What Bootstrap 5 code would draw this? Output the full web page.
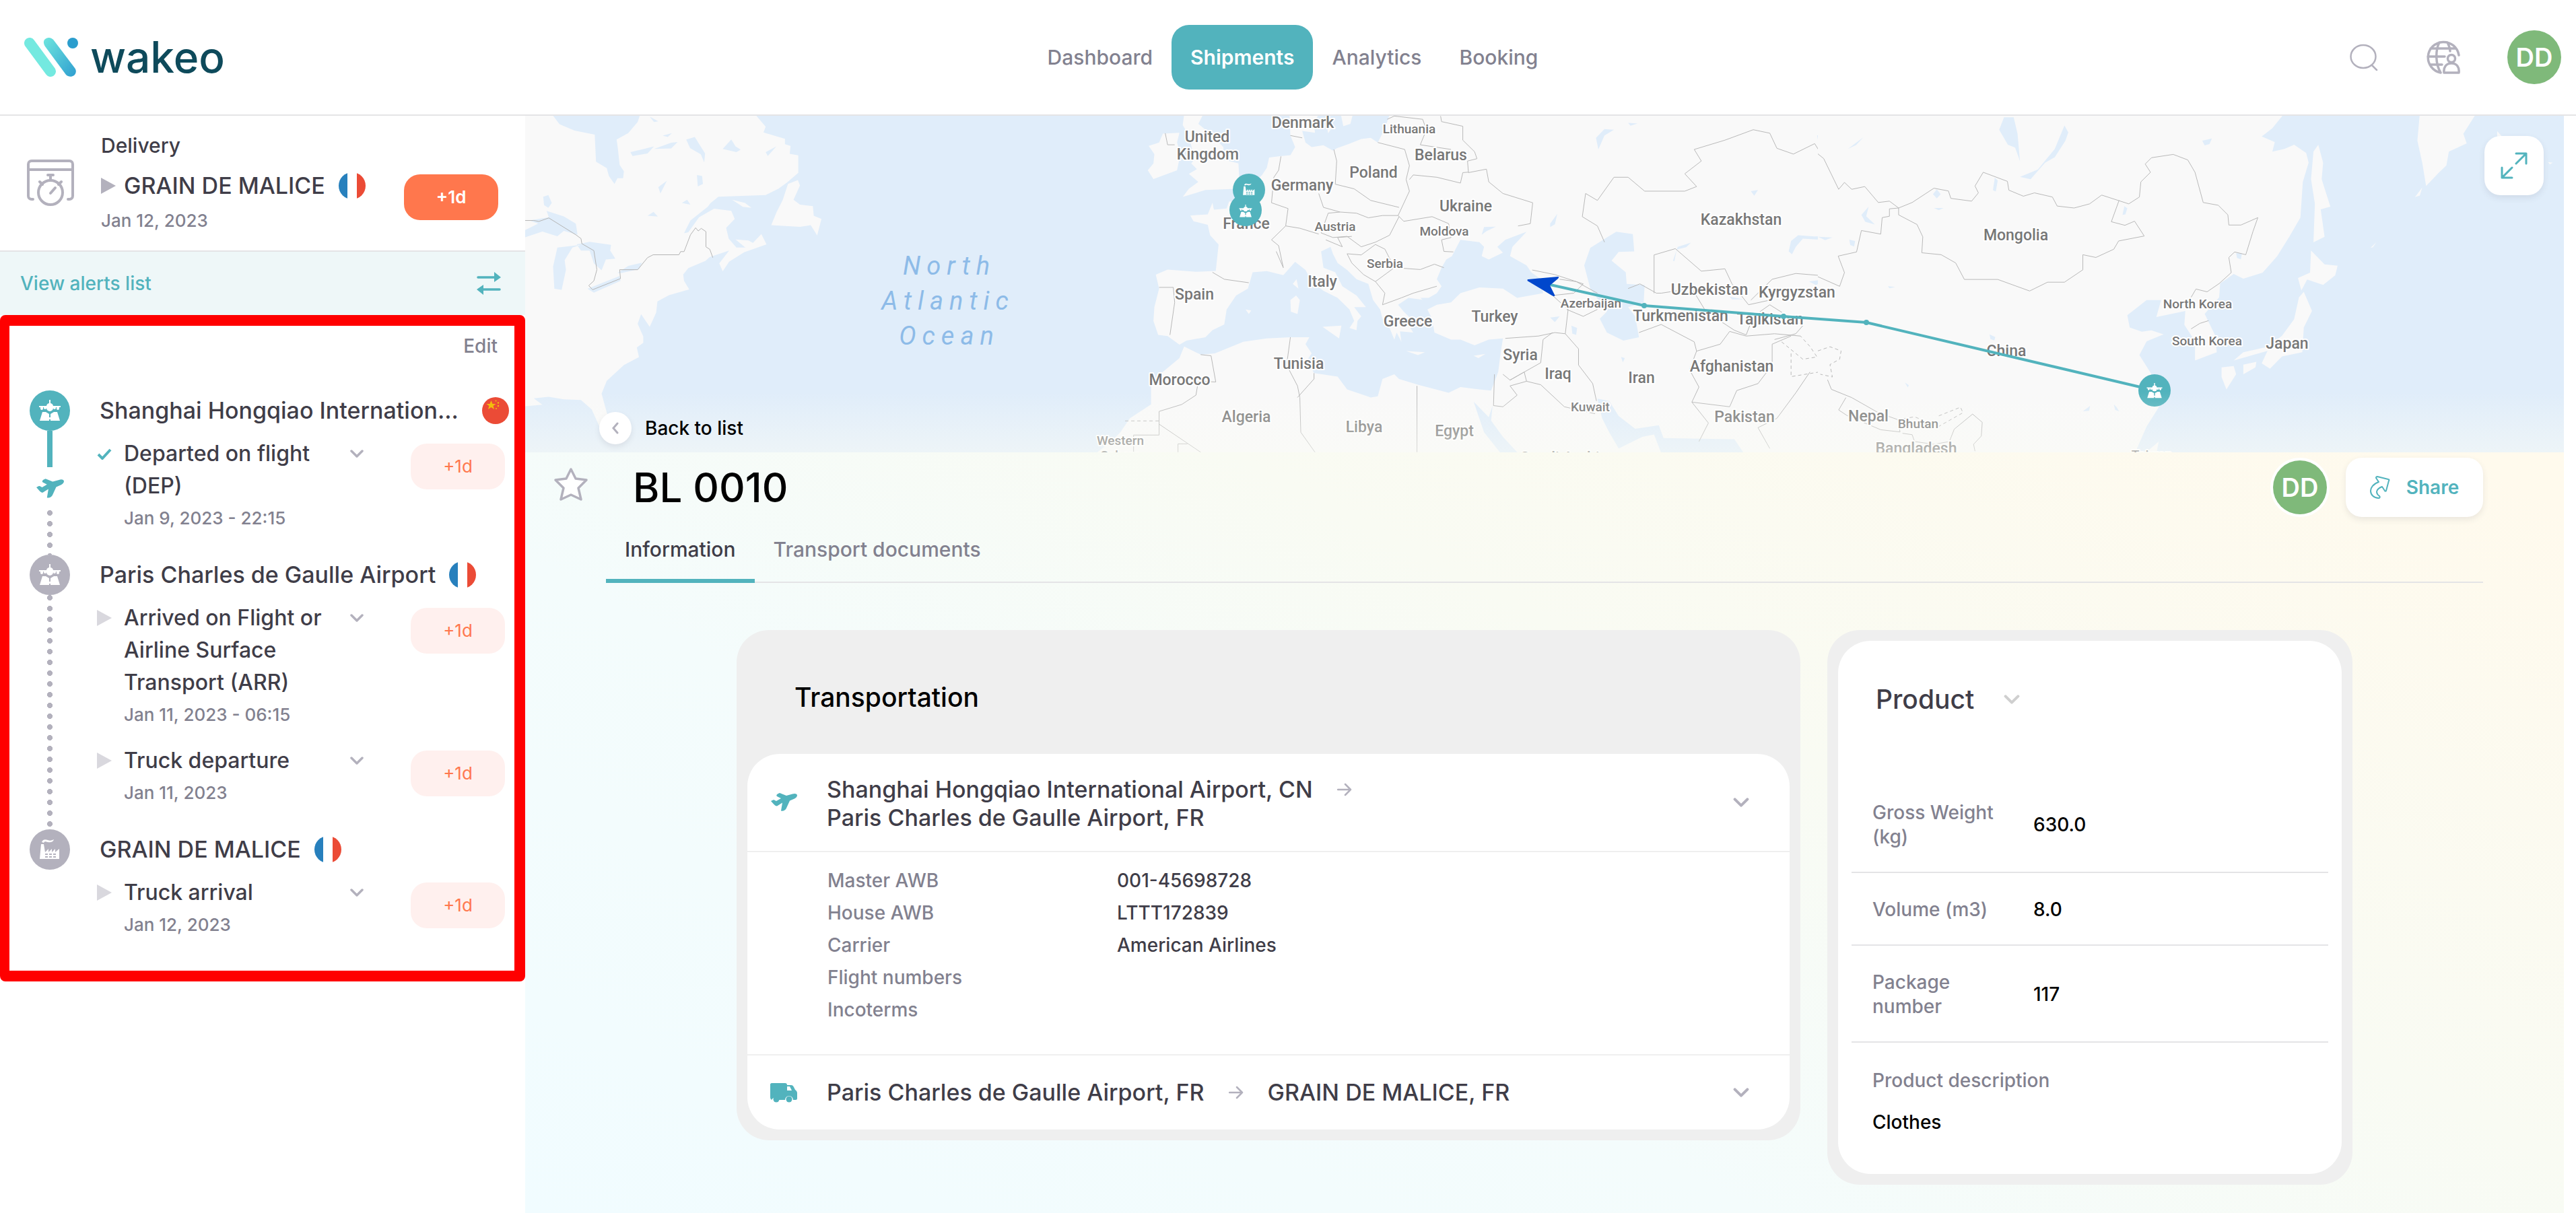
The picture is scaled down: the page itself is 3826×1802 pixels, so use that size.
<!DOCTYPE html>
<html lang="en">
<head>
<meta charset="utf-8">
<meta name="viewport" content="width=device-width, initial-scale=1">
<title>BL 0010 - Wakeo</title>
<link href="https://cdn.jsdelivr.net/npm/bootstrap@5.3.0/dist/css/bootstrap.min.css" rel="stylesheet">
<style>
:root{--teal:#52b3bd;--ink:#3f3d48;--slate:#82818f;--mist:#b3b1bd;--line:#e4e4e6;--orange:#ff774d}
body{font-family:Inter,"Liberation Sans",sans-serif;font-size:28px;line-height:36px;font-weight:500;color:var(--ink);background:#fff}
svg{display:block;flex:none}
a{text-decoration:none;color:inherit}
.topbar{height:172px;border-bottom:2px solid var(--line);padding:0 22px 0 36px}
.side-slot{flex:1 1 0}
.brand-name{font-size:64px;line-height:72px;color:#0e4a5b}
.topbar .nav-link{height:96px;padding:0 28px;border-radius:26px;color:var(--slate);font-size:30px}
.topbar .nav-link.active{background:var(--teal);color:#fff;font-weight:600}
.icon-btn{background:none;border:0;padding:0;color:var(--mist)}
.globe-btn{margin:0 70px 0 72px}
.avatar{width:80px;height:80px;border-radius:50%;background:#7fb97a;color:#fff;font-size:38px;font-weight:600}
.avatar-ring{box-shadow:0 0 0 4px #fff;margin-right:28px}
.sidebar{width:780px;flex:none;background:#fff}
.delivery{height:202px;border-bottom:2px solid var(--line);padding:0 40px}
.delivery-info{margin-left:40px}
.delivery-label{font-size:30px}
.delivery-place{margin:20px 0 12px}
.flag-gap{margin-left:20px}
.place{font-size:34px;line-height:44px}
.delay{width:140px;height:68px;border-radius:24px;border:0;font-size:26px;background:#fff0ee;color:var(--orange);flex:none}
.delay-strong{background:var(--orange);color:#fff;font-weight:600;margin-top:42px}
.alerts{height:94px;background:#eef7f8;color:var(--teal);padding:0 36px 0 30px}
.timeline{border:16px solid #f00;border-left-width:14px;border-radius:8px;height:990px;background:#fff}
.edit-row{height:96px;padding:12px 25px 0 0;color:var(--slate)}
.station{padding-left:30px}
.rail{width:60px;flex:none}
.stop{width:60px;height:60px;border-radius:50%;background:var(--mist);color:#fff;flex:none}
.stop-done{background:var(--teal)}
.solid{width:8px;height:54px;background:var(--teal)}
.leg{height:64px;color:var(--teal)}
.dots{width:8px;background:radial-gradient(circle at 4px 4px,var(--mist) 4px,transparent 4px) 0 0/8px 16px repeat-y}
.stop-body{margin-left:44px}
.stop-head{height:60px;gap:20px}
.events{gap:20px;padding:10px 14px 30px 0;margin-left:-4px}
.events .delay{margin-top:9px}
.event-text{width:302px;font-size:32px;line-height:48px;margin-left:18px}
.mark-box{width:22px;height:48px}
.event-date{color:var(--slate);white-space:nowrap;font-size:26px}
.chev{height:48px;margin-left:34px;background:none;border:0;padding:0;color:var(--mist)}
.main{background:linear-gradient(28deg,#f1fcff 0%,#f4fcfc 30%,#f9fbf3 52%,#fffaed 82%,#fffaed 100%);margin-right:18px;min-height:1630px}
.map-wrap{height:500px;background:#e0edfa;overflow:hidden}
.map-wrap>svg{width:100%;height:500px}
.ocean{letter-spacing:9px;font-weight:400}
.map-fade{left:0;right:0;bottom:0;height:90px;background:linear-gradient(rgba(250,251,245,0),rgba(250,251,245,.5))}
.expand{right:30px;top:30px;width:88px;height:88px}
.tile-btn{background:#fff;border:0;border-radius:24px;box-shadow:0 4px 10px rgba(60,60,80,.1);color:var(--teal)}
.back{left:110px;bottom:12px;gap:20px;color:#000}
.back-dot{width:48px;height:48px;border-radius:50%;background:#fff;box-shadow:0 4px 8px rgba(60,60,80,.1);color:var(--mist)}
.title-row{padding:8px 120px 0 42px}
.shipment{font-size:60px;line-height:88px;font-weight:500;color:#000;margin:0 0 0 66px}
.share{width:204px;height:88px;font-weight:600;gap:24px}
.tab-row{margin:0 120px;border-bottom:2px solid var(--line)}
.tab-row .nav-link{padding:28px 28px 24px;font-size:30px;line-height:40px;border-bottom:6px solid transparent;margin-bottom:-2px;color:var(--slate)}
.tab-row .nav-link.active{border-color:var(--teal);color:var(--ink)}
.panels{max-width:2400px;margin:70px auto 42px;gap:40px}
.panel-grey{background:#efefef;border-radius:48px;padding:16px}
.panel-white{background:#fff;border-radius:48px}
.transport{flex:1 1 1580px}
.product{flex:1 1 780px}
.panel-title{font-size:39px;line-height:40px;font-weight:500;margin:0}
.transport .panel-title{color:#000;padding:64px 70px}
.leg-row{padding:0 60px 0 34px;font-size:34px;line-height:42px}
.leg-names{margin-left:44px}
.leg-pair{gap:0 36px}
.first-leg{height:144px}
.first-leg .leg-names{padding-top:4px}
.second-leg{height:112px;border-top:2px solid #efefef}
.facts{border-top:2px solid #efefef;padding:18px 0 0 119px;line-height:48px;height:302px}
.facts dt{width:430px;font-weight:500;color:var(--slate)}
.facts dd{margin:0}
.product .panel-white{padding:67px 20px 0;height:792px}
.product .panel-title{padding-left:36px;gap:44px}
.product table{margin-top:94px;width:100%}
.product td,.product th{padding:36px 0 34px;font-weight:500;vertical-align:middle}
.product th{width:270px;padding-left:31px;padding-right:50px;color:var(--slate)}
.product td{color:#000}
.product tr{border-bottom:2px solid var(--line)}
.desc{padding:38px 31px;gap:26px}
.desc-label{color:var(--slate)}
</style>
<script src="https://cdn.jsdelivr.net/npm/bootstrap@5.3.0/dist/js/bootstrap.bundle.min.js"></script>
</head>
<body>
<svg width="0" height="0" class="position-absolute" aria-hidden="true">
<defs>
<symbol id="airport" viewBox="0 0 32 32"><path d="M15 0h2v5a5 5 0 0 1 4 4h11v2h-2v2a2 2 0 0 1-4 0v-2h-1v1a2 2 0 0 1-4 0 5 5 0 0 1-10 0 2 2 0 0 1-4 0v-1H6v2a2 2 0 0 1-4 0v-2H0V9h11a5 5 0 0 1 4-4z"/><path d="M5 18h5l5 3v5h2v-5l5-3h5l4 13H17v-2h-2v2H1z"/></symbol>
<symbol id="factory" viewBox="0 0 32 32"><path d="M4 5c2-5 6-4 9-3s5 1 9-1c-1 4-5 5-9 4s-5-1-6 1z"/><path fill-rule="evenodd" d="M3 8h4l2 12 5-5v5l5-5v5l5-5v5l6-5v15H1zM9 22v2h4v-2zm6 0v2h4v-2zm6 0v2h4v-2zM9 26v2h4v-2zm6 0v2h4v-2zm6 0v2h4v-2z"/></symbol>
<symbol id="plane" viewBox="0 0 40 28"><path d="M1 12l3-1.500c2-1 3 .5 5 1.500l7-4-6-3c-2-2 1-4 4-5l10 4 9-2.500c4-1.500 7 0 7 2s-2 4-4 5l-7 3-5 11c-1 3-5 5-8 4l2-12-8 5c-2 0-3-1-5-3z"/></symbol>
<symbol id="truck" viewBox="0 0 40 30"><path d="M2 1h20c2 0 3 1 3 3h6c2 0 3 1 4 3l2 4c2 1 3 3 3 5v8c0 1-1 2-2 2h-4a6 6 0 0 0-12 0h-9a6 6 0 0 0-11 0c-1-1-2-2-2-4V3c0-1 1-2 2-2z"/><path d="M25 6h4l3 6h-7z" fill="#fff"/><circle cx="9" cy="25" r="4.500"/><circle cx="28" cy="25" r="4.500"/></symbol>
<symbol id="down" viewBox="0 0 20 12"><path d="M2 2l8 8 8-8" fill="none" stroke="currentColor" stroke-width="3.500" stroke-linecap="round" stroke-linejoin="round"/></symbol>
<symbol id="right" viewBox="0 0 22 20"><path d="M1 10h19M12 2l8 8-8 8" fill="none" stroke="currentColor" stroke-width="2.500" stroke-linecap="round" stroke-linejoin="round"/></symbol>
<symbol id="play" viewBox="0 0 22 24"><path d="M0 0l22 12L0 24z"/></symbol>
<symbol id="fr" viewBox="0 0 40 40"><clipPath id="rnd"><circle cx="20" cy="20" r="20"/></clipPath><g clip-path="url(#rnd)"><path fill="#2780bd" d="M0 0h13v40H0z"/><path fill="#fff" d="M13 0h14v40H13z"/><path fill="#eb4b36" d="M27 0h13v40H27z"/></g></symbol>
<symbol id="cn" viewBox="0 0 40 40"><circle cx="20" cy="20" r="20" fill="#eb4b36"/><path fill="#f2bd0c" d="M13.500 5l2 5h5l-4 3 1.500 5-4.500-3-4.500 3 1.500-5-4-3h5z"/><g fill="#f2bd0c"><circle cx="20.500" cy="5.500" r="1"/><circle cx="24" cy="8.500" r="1.200"/><circle cx="24" cy="13" r="1.200"/><circle cx="21" cy="17" r="1"/></g></symbol>
</defs>
</svg>

<header class="topbar d-flex align-items-center">
  <div class="side-slot">
    <a href="#" class="d-inline-flex align-items-center gap-3">
      <svg width="82" height="58" viewBox="0 0 82 58"><defs><linearGradient id="lg" x1="0" y1="0" x2="1" y2="1"><stop offset="0" stop-color="#6ee5de"/><stop offset="1" stop-color="#2f9fd0"/></linearGradient></defs><path d="M8 8l31 42" stroke="#74e9e0" stroke-width="16" stroke-linecap="round"/><path d="M30 3c4-4 10-4 14 1l31 41c3 4 2 8-1 11-4 3-9 2-12-1L31 13c-2-3-3-7-1-10z" fill="url(#lg)"/><circle cx="72" cy="8" r="8" fill="#2b9dcd"/></svg>
      <span class="brand-name">wakeo</span>
    </a>
  </div>
  <nav class="nav">
    <a class="nav-link d-flex align-items-center" href="#">Dashboard</a>
    <a class="nav-link active d-flex align-items-center" href="#">Shipments</a>
    <a class="nav-link d-flex align-items-center" href="#">Analytics</a>
    <a class="nav-link d-flex align-items-center" href="#">Booking</a>
  </nav>
  <div class="side-slot d-flex justify-content-end align-items-center">
    <button class="icon-btn" aria-label="Search"><svg width="42" height="40" viewBox="0 0 42 40" fill="none" stroke="currentColor" stroke-width="2.500" stroke-linecap="round"><ellipse cx="20" cy="19" rx="18.500" ry="17"/><path d="M33 32l7 7"/></svg></button>
    <button class="icon-btn globe-btn" aria-label="Language"><svg width="50" height="50" viewBox="0 0 50 50" fill="none" stroke="currentColor" stroke-width="3.500" stroke-linecap="round" stroke-linejoin="round"><path d="M48 22A23 23 0 1 0 21 48M19 3c-6 12-6 32 2 45M31 3c2 4 4 8 4 13M6 12h37M2 24h25M5 36h18"/><circle cx="37" cy="27" r="5.500"/><path d="M26 48c-1-8 3-14 11-14s12 6 11 14z"/></svg></button>
    <span class="avatar d-flex align-items-center justify-content-center">DD</span>
  </div>
</header>

<div class="d-flex">
  <aside class="sidebar">
    <section class="delivery d-flex align-items-center">
      <svg width="70" height="70" viewBox="0 0 70 70" fill="none" stroke="#b3b1bd" stroke-width="4" stroke-linecap="round" stroke-linejoin="round"><path d="M9 59H7c-3 0-5-2-5-5V7c0-3 2-5 5-5h56c3 0 5 2 5 5v47c0 3-2 5-5 5h-2M3 15h64M31 23h8M35 24v6M19 33l4 4M51 33l-4 4"/><circle cx="35" cy="49" r="18"/><path d="M35 50l7-8"/></svg>
      <div class="delivery-info">
        <div class="delivery-label">Delivery</div>
        <div class="place delivery-place d-flex align-items-center"><svg width="22" height="24" fill="#b3b1bd" class="me-2"><use href="#play"/></svg><span class="ms-1">GRAIN DE MALICE</span><svg width="40" height="40" class="flag-gap"><use href="#fr"/></svg></div>
        <div class="event-date">Jan 12, 2023</div>
      </div>
      <button class="delay delay-strong ms-auto">+1d</button>
    </section>
    <a href="#" class="alerts d-flex align-items-center justify-content-between">View alerts list
      <svg width="36" height="34" viewBox="0 0 36 34"><path d="M2 8h28M34 26H6" stroke="#52b3bd" stroke-width="3.500" stroke-linecap="round"/><path d="M26 0l10 8-10 7zM10 19v15L0 26z" fill="#52b3bd"/></svg>
    </a>

    <section class="timeline">
      <div class="edit-row text-end"><a href="#">Edit</a></div>

      <div class="station d-flex">
        <div class="rail d-flex flex-column align-items-center">
          <span class="stop stop-done d-flex align-items-center justify-content-center"><svg width="32" height="32" fill="currentColor"><use href="#airport"/></svg></span>
          <span class="solid"></span>
          <span class="leg d-flex align-items-center"><svg width="42" height="30" fill="currentColor"><use href="#plane"/></svg></span>
          <span class="dots flex-grow-1"></span>
        </div>
        <div class="stop-body flex-grow-1">
          <div class="stop-head place d-flex align-items-center text-nowrap">Shanghai Hongqiao Internation...<svg width="40" height="40" class="ms-auto me-2"><use href="#cn"/></svg></div>
          <div class="events d-flex flex-column">
            <div class="d-flex">
              <span class="mark-box d-flex align-items-center"><svg width="22" height="17" viewBox="0 0 22 17"><path d="M2 9l6 6L20 2" fill="none" stroke="#52b3bd" stroke-width="4"/></svg></span>
              <div class="event-text">Departed on flight (DEP)<div class="event-date">Jan 9, 2023 - 22:15</div></div>
              <button class="chev d-flex align-items-center" aria-label="Details"><svg width="20" height="12"><use href="#down"/></svg></button>
              <button class="delay ms-auto">+1d</button>
            </div>
          </div>
        </div>
      </div>

      <div class="station d-flex">
        <div class="rail d-flex flex-column align-items-center">
          <span class="stop d-flex align-items-center justify-content-center"><svg width="32" height="32" fill="currentColor"><use href="#airport"/></svg></span>
          <span class="dots flex-grow-1"></span>
        </div>
        <div class="stop-body flex-grow-1">
          <div class="stop-head place d-flex align-items-center text-nowrap">Paris Charles de Gaulle Airport<svg width="40" height="40"><use href="#fr"/></svg></div>
          <div class="events d-flex flex-column">
            <div class="d-flex">
              <span class="mark-box d-flex align-items-center"><svg width="22" height="24" fill="#d9d8de"><use href="#play"/></svg></span>
              <div class="event-text">Arrived on Flight or Airline Surface Transport (ARR)<div class="event-date">Jan 11, 2023 - 06:15</div></div>
              <button class="chev d-flex align-items-center" aria-label="Details"><svg width="20" height="12"><use href="#down"/></svg></button>
              <button class="delay ms-auto">+1d</button>
            </div>
            <div class="d-flex">
              <span class="mark-box d-flex align-items-center"><svg width="22" height="24" fill="#d9d8de"><use href="#play"/></svg></span>
              <div class="event-text">Truck departure<div class="event-date">Jan 11, 2023</div></div>
              <button class="chev d-flex align-items-center" aria-label="Details"><svg width="20" height="12"><use href="#down"/></svg></button>
              <button class="delay ms-auto">+1d</button>
            </div>
          </div>
        </div>
      </div>

      <div class="station d-flex">
        <div class="rail d-flex flex-column align-items-center">
          <span class="stop d-flex align-items-center justify-content-center"><svg width="32" height="32" fill="currentColor"><use href="#factory"/></svg></span>
        </div>
        <div class="stop-body flex-grow-1">
          <div class="stop-head place d-flex align-items-center text-nowrap">GRAIN DE MALICE<svg width="40" height="40"><use href="#fr"/></svg></div>
          <div class="events d-flex flex-column">
            <div class="d-flex">
              <span class="mark-box d-flex align-items-center"><svg width="22" height="24" fill="#d9d8de"><use href="#play"/></svg></span>
              <div class="event-text">Truck arrival<div class="event-date">Jan 12, 2023</div></div>
              <button class="chev d-flex align-items-center" aria-label="Details"><svg width="20" height="12"><use href="#down"/></svg></button>
              <button class="delay ms-auto">+1d</button>
            </div>
          </div>
        </div>
      </div>
    </section>
  </aside>

  <main class="main flex-grow-1">
    <div class="map-wrap position-relative">
      <svg viewBox="780 172 3028 500" preserveAspectRatio="xMidYMid slice">
        <!-- North America -->
        <g transform="translate(780 160) scale(.6378 .4719)" fill="#f9f9f9">
          <path d="M0 20H62L80 52 115 72 162 85 165 170 190 190 195 215 208 240 215 222 228 222 230 200 220 180 216 130 213 100 240 80 262 45 268 20H535L560 60 555 78 605 98 605 115 618 120 616 145 636 150 636 205 610 235 590 255 560 275 450 280 432 300 425 312 385 355 370 395 380 392 405 345 440 318 480 325 488 350 468 378 474 412 492 440 520 440 550 398 562 430 510 455 475 485 460 515 452 490 475 450 430 470 420 482 380 505 368 525 370 545 382 572 335 590 308 610 305 645 290 690 270 650 262 680 275 720 275 740 260 755 265 785 230 810 190 860 178 900 190 960 205 1000 200 1030 175 1010 155 950 130 920 90 918 55 910 20 915 40 935 0 940z"/>
          <path d="M635 228L612 240 600 290 585 330 573 370 640 375 665 370 680 402 690 350 672 340 670 310 640 305 625 290 640 245zM482 290l30 10 15 15-20-3zM490 415l30 3 20 15-25 10z"/>
          <path fill="#e0edfa" d="M0 385L30 365 10 355 55 345 50 325 90 342 118 365 122 400 90 388 75 405 40 390 0 408zM75 440L65 500 68 570 85 573 95 510 92 480 110 440 130 432zM120 430L150 422 200 432 198 450 210 475 188 478 178 512 160 490 150 450 130 450zM145 570L220 530 222 545 160 582zM215 520L240 498 272 488 265 508 225 520zM42 280l12-5 8 25-8 15-10-8zM245 140l25-8 30-10-15 22-35 8zM300 130l40-20 15-2-15 20zM320 88l22-8-10 12zM375 100l20-8 10 22 14 30-2 28-8-25-25-20zM460 130l20-30 10 22 12 10-10 8zM310 250l20-20-15 40zM400 212l12 3 2 25-12 8zM285 340l14-12 10 15zM560 140l25-18-20 30zM205 30l15-5-15 25zM290 28l20 15-10 2zM365 300l12-10 8 15z"/>
          <path d="M0 355H20L32 358 55 347 118 400 130 412 132 428 160 450 167 510 160 545 148 560 157 573 222 538 220 510H262L285 472 298 463H358L362 453 370 453 385 400 397 378 403 388 410 380 421 390V438L430 446 437 472" fill="none" stroke="#b5b5b5" vector-effect="non-scaling-stroke"/>
        </g>
        <!-- Europe, Africa and Middle East -->
        <g transform="translate(1650 160) scale(.7015 .3444)" fill="#f9f9f9">
          <path d="M1568 30H590L580 90 565 150 550 130 530 135 505 155 478 175 470 185 450 162 425 170 412 150 405 100 432 108 430 60 440 30H378L380 120 390 170 380 205 355 210 335 215 330 260 320 290 305 320 300 350 270 400 250 405 245 435 218 440 215 410 205 460 168 465 175 490 205 505 210 550 228 590 222 704 180 708 120 698 95 720 102 780 92 860 90 920 100 980 120 985 145 1022 160 1005 200 990 215 960 240 935 245 870 265 810 290 780 300 710 330 705 365 722 390 665 412 700 425 750 450 790 480 820 505 870 515 920 505 950 520 960 522 920 530 900 515 860 540 860 520 810 490 770 475 710 450 690 445 620 465 600 470 630 480 670 500 700 520 740 545 760 555 830 570 870 575 910 590 950 600 1000 605 970 615 1010 612 965 640 970 625 920 650 940 620 880 608 850 630 820 665 830 690 800 700 770 690 740 700 690 710 655 722 640 740 570 780 580 790 600 785 640 800 655 830 625 818 600 835 570 880 535 850 600 845 640 880 680 890 710 910 740 915 800 860 820 830 780 780 775 740 800 720 840 690 850 670 870 680 910 685 970 720 1000 740 1000 770 1025 800 1000 830 995 825 1060 820 1140 805 1220 780 1215 740 1205 715 1230 650 1195 610 1170 600 1150 575 1170 565 1245 550 1250 500 1215 480 1160 430 1145 415 1090 425 1060 412 1020 420 990 380 990 330 995 280 1010 220 1060 190 1065 155 1030 145 1080 110 1140 85 1190 85 1280 40 1340 20 1400 0 1440-31 1490H1568z"/>
          <path d="M155 30L152 75 165 120 172 180 180 215 170 240 182 265 165 285 185 320 165 350 152 385 200 355 265 350 272 320 270 240 240 225 238 170 215 120 185 70 195 30zM145 108L110 112 102 150 80 165 92 200 90 240 78 270 90 308 140 270 147 200 140 150zM448 945l40-5-5 55zM380 830l12-20 8 20-5 60-14-10zM385 760l8-20 4 40zM625 1050l40 5-15 12zM768 1070l25-8-15 18zM285 870l12 5-5 15zM455 60l15 20-10 30zM487 30h25l-5 40-15 10z"/>
          <path fill="#e0edfa" d="M1050 560L1070 535 1105 545 1108 620 1075 622 1060 660 1090 710 1092 760 1130 765 1128 840 1095 860 1110 900 1118 990 1085 1005 1050 970 1035 910 1050 880 1015 780 1002 680 1015 605zM1030 1255L1055 1265 1075 1330 1110 1385 1160 1370 1170 1425 1320 1430 1340 1490H1165L1150 1410 1125 1420 1075 1470 1055 1400 1040 1340zM768 1268L800 1335 808 1285 805 1350 830 1420 862 1490H825L790 1400zM1435 620L1440 575 1455 550 1490 555 1527 553 1522 572 1465 565 1450 600 1442 632zM1190 660l10-60 28-18-10 20-20 10-5 50zM930 500l15-42-5 45-10 12zM1032 180l-5-50 18-38 20 3-20 25zM975 940l12 10-2 30-8-5zM1495 120l10-5 2 25-10 0zM1355 360l15-5-8 25zM1478 750l35-10-20 25zM1310 815l30 12-25 0zM930 905l20-5-10 25zM1080 1075l8 5-4 18zM790 515l25-2-20 20-10 15zM1095 65l20 3-15 10zM655 820l60 0 0 18-50 0z"/>
          <g fill="none" stroke="#b9b9b9">
            <path vector-effect="non-scaling-stroke" d="M360 210L355 270 345 300 340 410 375 435 370 510 340 570 355 595 365 690 350 620M472 180L478 230 475 330 515 350 550 400 610 430M440 370L450 430 485 450 460 455 445 540 470 560 500 555 530 600 560 580 590 550 610 470M485 450L520 455 545 475 575 465 608 465 632 360 625 310 632 250 622 180 565 150M600 36L585 50M600 36L660 50 668 95 655 160 720 180M698 36L700 60 745 80 745 140 770 190 775 220 755 230 757 280 795 265 800 320 830 370 893 410 888 500 862 510M632 310L640 290 690 300 740 325 745 280 757 278M608 465L620 490 680 470 715 500 720 560 700 570 705 620 725 622M500 630L530 635 560 590 580 610 600 690 655 698 685 675 705 690M500 630L510 670 535 720 560 750 600 690M560 750L580 800 575 850 615 820 640 800 690 770M380 120L405 130M370 510L400 520 440 545M455 570L490 600 480 560 510 555M215 710L240 740 292 755M102 775L132 775 135 840 125 980M115 110L120 160 135 160M380 990L372 1110 395 1200 400 1250 402 1400 432 1486M430 1145V1170L395 1250M648 1200V1486M190 1065L212 1070 222 1183 185 1180 180 1240 150 1280 102 1310V1412L48 1412V1486M102 1365L190 1486M142 1486V1450H162M835 995L905 985 940 970 962 975 968 870 935 810 980 800 1000 760 940 720 892 700M830 1150L845 1175 910 1100 915 1000 935 970M845 1175L875 1140 880 1180 845 1200 860 1240 830 1290 810 1285 812 1150M880 1180L910 1195 960 1290 1025 1320M962 975L990 1040 990 1110 1020 1190 1028 1265M950 740L985 750 1030 800M965 870L1000 900 1030 870M1045 580L1030 510 998 470 1005 370 1030 400 1065 300 1095 300 1130 360 1215 360 1240 340 1215 285 1250 230 1235 180 1300 140 1360 95 1395 110 1410 175 1445 200 1490 155 1510 220 1540 350 1568 350M1095 780L1120 760 1155 800 1165 800M1150 800V635L1195 608 1250 705 1300 695 1315 760 1350 850 1395 830M1165 800L1230 780 1260 880 1320 960 1345 980M1355 830L1400 740 1450 715 1568 735M1345 980L1360 900 1395 850 1465 940 1450 975 1405 1000M1118 970L1165 935 1235 1010 1240 1050 1290 1020 1310 965 1345 985 1405 975 1460 985M1240 1050L1225 1130 1245 1205 1230 1270 1310 1290 1325 1220 1370 1190 1400 1110 1400 1020 1440 985M1230 1270L1265 1360 1245 1440M1480 1140L1450 1230 1410 1340 1370 1380 1395 1470M1568 620L1540 640 1550 720"/>
            <path vector-effect="non-scaling-stroke" stroke-dasharray="5 4" d="M30 1351H102M1420 1010L1465 1085 1495 1075 1480 1030 1460 985M1440 1060L1440 1160 1500 1140 1530 1170 1510 1080 1520 1030 1548 1040 1540 1100"/>
          </g>
        </g>
        <!-- East Asia -->
        <g transform="translate(2700 160) scale(.7181 .4082)" fill="#f9f9f9">
          <path d="M0 20H965L940 75 918 105 945 125 940 160 965 150 985 135 1010 165 1015 200 1003 270 998 400 975 470 950 540 920 600 880 622 860 605 832 640 830 690 800 750 822 830 825 890 780 920 780 850 758 790 760 740 700 762 710 700 680 700 640 755 645 800 670 815 690 810 715 825 680 850 665 900 690 970 705 1090 680 1160 655 1260H0z"/>
          <path d="M1035 135L1045 200 1042 260 1060 360 1040 370 1048 470 1025 490 1028 350 1020 260 1025 160zM1245 20H1362L1335 95 1342 130 1305 160 1300 210 1285 235 1258 285 1250 200 1240 120zM1020 520L1048 570 1075 575 1070 610 1045 645 1012 625 1000 665 993 620 1018 600zM1005 670L1022 740 1005 800 1002 890 960 905 935 950 918 930 930 885 860 920 880 890 930 870 960 830 985 770 995 690zM835 945L860 940 865 970 845 1025 835 980zM880 935L907 925 905 945 880 970zM705 1215L700 1260H675zM1250 290l-15 35 10-5zM1155 490l-12 20 5-2zM1095 555l-8 16zM1405 85l10 20h-10zM1510 198l10 2-6 6z"/>
          <path fill="#e0edfa" d="M510 65L518 90 512 120 490 180 470 200 440 260 418 252 455 225 490 150zM375 80l10-45 20 0 8 60 5 100-10-50-15-10zM238 315l8-18 8 18-8 15zM362 300l4-45 6 10-4 40zM630 390l4-32 6 8-4 22zM795 120l20-8-5 20-10 5zM90 390l15-30-5 35 18 30-20-10zM65 480l12 5-2 20-8-5zM0 470l30 2-15 10zM865 530l12 0-2 22-8-5zM355 825l12 10-2 12-8-5zM62 150l32-42-15 28zM612 1080l6 10 5 15-8-5zM180 1000l8 10-2 8zM240 365l20 0-10 8zM145 650l15 2-12 5zM548 1105l15-20-2 18z"/>
          <g fill="none" stroke="#b9b9b9">
            <path vector-effect="non-scaling-stroke" d="M0 168L12 185 43 297 55 272 70 297 97 287 125 345 148 340 167 365 195 345 240 293 270 303 275 330 318 340 332 310 325 285 342 235 392 268 395 300 425 322 448 310 485 325 495 358 530 365 562 350 587 318 643 350 665 325 668 270 688 235 677 205 690 182 735 170 765 190 780 235 797 345 828 355 848 390 850 427H875L910 400 900 450 885 535 862 525 850 545 855 600 830 640 805 670 782 660 772 690M623 337L607 415 635 428 655 413 675 467 622 485 612 515 575 545 548 535 548 590 510 635H475L438 667 372 625H303L285 565 255 535 215 528 217 470 205 425 167 390 167 365 148 368 148 395 133 400 130 460 90 447 80 525 42 540 55 600 45 650 0 615M772 805L790 785 808 775M20 990L28 1025 70 1055 125 1110 165 1135 170 1180 130 1172 60 1120 43 1100 58 1055M175 1185L195 1190 200 1215 240 1225 272 1215 282 1170 320 1115 340 1145 338 1195 322 1225 325 1250"/>
            <path vector-effect="non-scaling-stroke" stroke-dasharray="5 4" d="M0 885L25 870 48 885 45 915 25 935 30 980 5 970M165 1135L200 1125 250 1160 300 1110 295 1090 245 1125"/>
          </g>
        </g>
        <g font-family="Roboto, sans-serif" fill="#777" text-anchor="middle" paint-order="stroke" stroke="#fff" stroke-width="4" stroke-linejoin="round" font-size="23">
          <text x="1793" y="211">United</text><text x="1794" y="237">Kingdom</text><text x="1935" y="190">Denmark</text><text x="2140" y="238">Belarus</text><text x="2040" y="264">Poland</text><text x="1934" y="283">Germany</text><text x="2177" y="314">Ukraine</text><text x="1851" y="340">France</text><text x="1964" y="426">Italy</text><text x="1774" y="445">Spain</text><text x="2091" y="485">Greece</text><text x="2220" y="478">Turkey</text><text x="2539" y="438">Uzbekistan</text><text x="2496" y="477">Turkmenistan</text><text x="2669" y="442">Kyrgyzstan</text><text x="2629" y="482">Tajikistan</text><text x="2586" y="334">Kazakhstan</text><text x="2258" y="535">Syria</text><text x="2314" y="563">Iraq</text><text x="2438" y="569">Iran</text><text x="2572" y="552">Afghanistan</text><text x="2591" y="627">Pakistan</text><text x="1929" y="548">Tunisia</text><text x="1752" y="572">Morocco</text><text x="1851" y="627">Algeria</text><text x="2026" y="642">Libya</text><text x="2160" y="648">Egypt</text><text x="2323" y="688">Saudi Arabia</text><text x="2994" y="357">Mongolia</text><text x="2980" y="529">China</text><text x="3397" y="518">Japan</text><text x="2775" y="626">Nepal</text><text x="2846" y="674">Bangladesh</text>
          <g font-size="19"><text x="2093" y="198">Lithuania</text><text x="1983" y="343">Austria</text><text x="2145" y="350">Moldova</text><text x="2057" y="398">Serbia</text><text x="2363" y="457">Azerbaijan</text><text x="2362" y="611">Kuwait</text><text x="3264" y="458">North Korea</text><text x="3278" y="513">South Korea</text><text x="2849" y="636">Bhutan</text><text x="1664" y="661">Western</text><text x="1664" y="683">Sahara</text><text x="3196" y="682">Taiwan</text></g>
        </g>
        <g class="ocean" font-family="Roboto, sans-serif" font-style="italic" font-size="38" fill="#8dbbe8" text-anchor="middle"><text x="1410" y="408">North</text><text x="1408" y="460">Atlantic</text><text x="1410" y="512">Ocean</text></g>
        <path d="M2298 422L2442 454 2649 470 2772 479 3200 580" fill="none" stroke="#52b3bd" stroke-width="4"/>
        <g fill="#52b3bd"><circle cx="2442" cy="454" r="4"/><circle cx="2649" cy="470" r="4"/><circle cx="2772" cy="479" r="4"/><circle cx="1855" cy="282" r="24"/><circle cx="1850" cy="312" r="24"/><circle cx="3200" cy="580" r="24"/></g>
        <path d="M2270 415l44-4c2 0 1 2 0 3l-12 10 7 14c1 3-2 2-4 1l-35-21c-2-1-2-3 0-3z" fill="#0047cc"/>
        <g fill="#fff"><use href="#factory" x="1844" y="272" width="22" height="19"/><use href="#airport" x="1838" y="304" width="24" height="19"/><use href="#airport" x="3188" y="569" width="24" height="23"/></g>
      </svg>
      <div class="map-fade position-absolute"></div>
      <button class="tile-btn expand position-absolute d-flex align-items-center justify-content-center" aria-label="Expand map"><svg width="42" height="42" viewBox="0 0 42 42" fill="none" stroke="currentColor" stroke-width="3" stroke-linecap="round" stroke-linejoin="round"><path d="M24 3h15v15M39 3L24 18M3 24v15h15M3 39l15-15"/></svg></button>
      <a href="#" class="back position-absolute d-flex align-items-center"><span class="back-dot d-flex align-items-center justify-content-center"><svg width="12" height="18" viewBox="0 0 12 18"><path d="M9 2L3 9l6 7" fill="none" stroke="currentColor" stroke-width="3" stroke-linecap="round"/></svg></span>Back to list</a>
    </div>

    <div class="title-row d-flex align-items-center">
      <button class="icon-btn pb-2" aria-label="Favourite"><svg width="52" height="52" viewBox="0 0 52 52"><path d="M26 3l7 14 16 2-12 12 4 17-15-7-15 7 4-17L3 19l16-2z" fill="#fff" stroke="#b3b1bd" stroke-width="3.500" stroke-linejoin="round"/></svg></button>
      <h1 class="shipment">BL 0010</h1>
      <span class="avatar avatar-ring d-flex align-items-center justify-content-center ms-auto">DD</span>
      <button class="tile-btn share d-flex align-items-center justify-content-center"><svg width="30" height="34" viewBox="0 0 30 34" fill="none" stroke="currentColor" stroke-width="2" stroke-linejoin="round"><path d="M11 1l16 4c1 0 2 1 1 2l-4 15c0 1-2 1-2 0l-4-6c-8 3-11 9-4 14 1 1 1 3-1 3C-2 32-4 15 13 9l-4-6c0-1 0-2 2-2z"/></svg>Share</button>
    </div>
    <nav class="nav tab-row">
      <a class="nav-link active" href="#">Information</a>
      <a class="nav-link" href="#">Transport documents</a>
    </nav>

    <div class="panels d-flex align-items-start">
      <section class="panel-grey transport">
        <h2 class="panel-title">Transportation</h2>
        <div class="panel-white">
          <div class="leg-row first-leg d-flex align-items-center">
            <svg width="40" height="28" fill="#52b3bd"><use href="#plane"/></svg>
            <div class="leg-names">
              <div class="leg-pair d-flex align-items-center">Shanghai Hongqiao International Airport, CN<svg width="22" height="20" color="#b3b1bd"><use href="#right"/></svg></div>
              <div>Paris Charles de Gaulle Airport, FR</div>
            </div>
            <button class="icon-btn ms-auto" aria-label="Toggle"><svg width="24" height="14"><use href="#down"/></svg></button>
          </div>
          <dl class="facts mb-0">
            <div class="d-flex"><dt>Master AWB</dt><dd>001-45698728</dd></div>
            <div class="d-flex"><dt>House AWB</dt><dd>LTTT172839</dd></div>
            <div class="d-flex"><dt>Carrier</dt><dd>American Airlines</dd></div>
            <div class="d-flex"><dt>Flight numbers</dt><dd></dd></div>
            <div class="d-flex"><dt>Incoterms</dt><dd></dd></div>
          </dl>
          <div class="leg-row second-leg d-flex align-items-center">
            <svg width="40" height="30" fill="#52b3bd"><use href="#truck"/></svg>
            <div class="leg-names leg-pair d-flex align-items-center">Paris Charles de Gaulle Airport, FR<svg width="22" height="20" color="#b3b1bd"><use href="#right"/></svg>GRAIN DE MALICE, FR</div>
            <button class="icon-btn ms-auto" aria-label="Toggle"><svg width="24" height="14"><use href="#down"/></svg></button>
          </div>
        </div>
      </section>

      <section class="panel-grey product">
        <div class="panel-white">
          <h2 class="panel-title d-flex align-items-center">Product<button class="icon-btn" aria-label="Toggle"><svg width="24" height="14" color="#cfcfcf"><use href="#down"/></svg></button></h2>
          <table>
            <tbody>
            <tr><th scope="row">Gross Weight (kg)</th><td>630.0</td></tr>
            <tr><th scope="row" class="text-nowrap">Volume (m3)</th><td>8.0</td></tr>
            <tr><th scope="row">Package number</th><td>117</td></tr>
            </tbody>
          </table>
          <div class="desc d-flex flex-column">
            <span class="desc-label">Product description</span>
            <span class="text-black">Clothes</span>
          </div>
        </div>
      </section>
    </div>
  </main>
</div>
</body>
</html>
